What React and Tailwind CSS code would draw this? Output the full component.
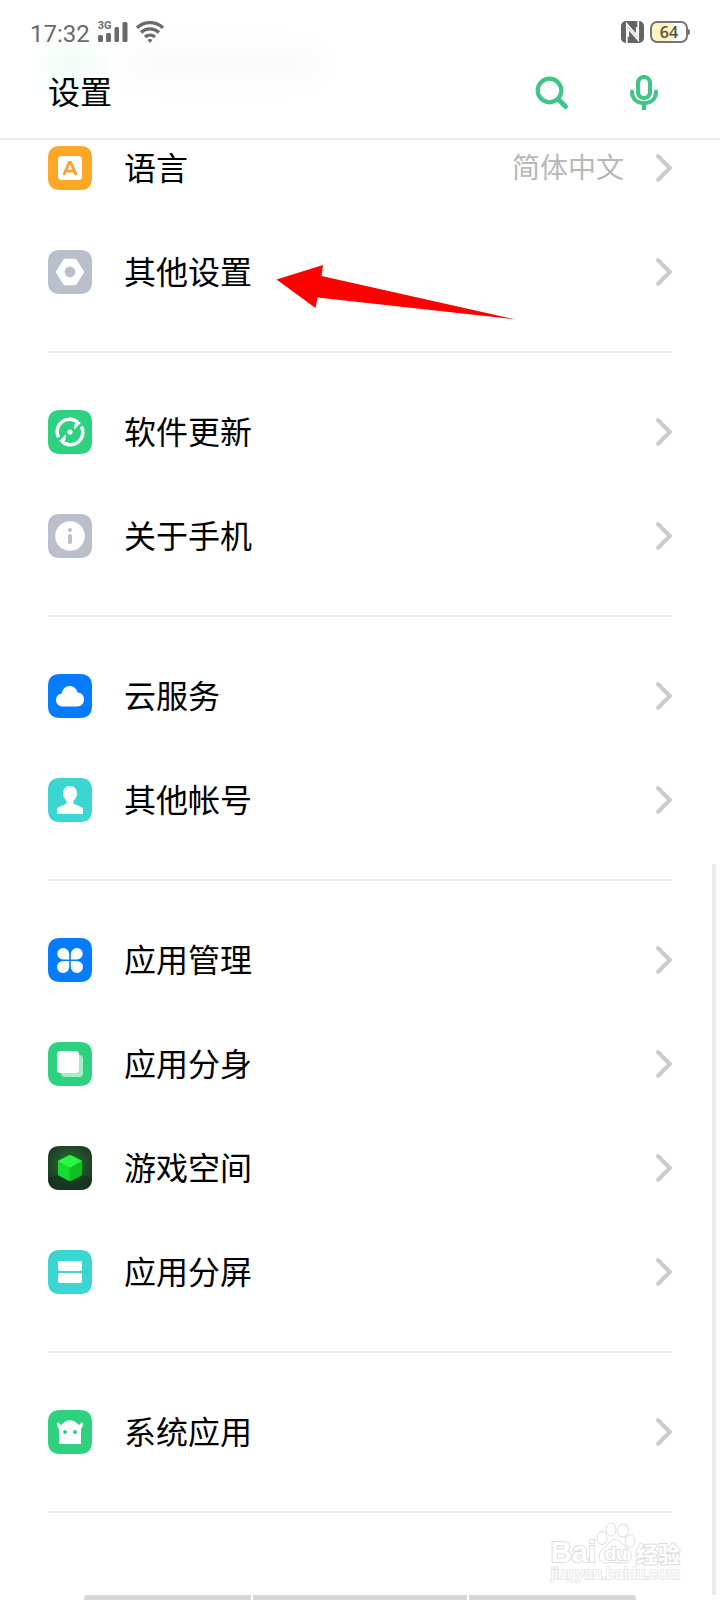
import React from "react";

const groups = [
  [
    { name: "语言", icon: "language", value: "简体中文" },
    { name: "其他设置", icon: "other" },
  ],
  [
    { name: "软件更新", icon: "update" },
    { name: "关于手机", icon: "about" },
  ],
  [
    { name: "云服务", icon: "cloud" },
    { name: "其他帐号", icon: "account" },
  ],
  [
    { name: "应用管理", icon: "apps" },
    { name: "应用分身", icon: "clone" },
    { name: "游戏空间", icon: "game" },
    { name: "应用分屏", icon: "split" },
  ],
  [{ name: "系统应用", icon: "system" }],
];

const tileColors = {
  language: "#fda727",
  other: "#b9bfcb",
  update: "#2ed180",
  about: "#b9bfcb",
  cloud: "#047cff",
  account: "#3bd6d2",
  apps: "#047cff",
  clone: "#2ed180",
  game: "url(#gameTile)",
  split: "#3bd6d2",
  system: "#2ed180",
};

const glyphs = {
  language: (
    <>
      <rect x="10" y="10" width="24" height="24" rx="3.5" fill="#fff" />
      <path d="M16.3 27.8 L21.2 16.500 H22.800 L27.700 27.800 M17.8 25 H26.200" fill="none" stroke="#f3a53a" strokeWidth="3" strokeLinecap="round" strokeLinejoin="round" />
    </>
  ),
  other: (
    <>
      <path d="M17 10.800 H27 L34 22 L27 33.200 H17 L10 22 Z" fill="#fff" stroke="#fff" strokeWidth="4" strokeLinejoin="round" />
      <circle cx="22" cy="22" r="5.400" fill="#b9bfcb" />
    </>
  ),
  update: (
    <>
      <g fill="none" stroke="#fff" strokeWidth="3.400">
        <path d="M10.600 27.500 A12.400 12.400 0 0 1 30 12.600" />
        <path d="M33.400 16.500 A12.400 12.400 0 0 1 14 31.400" />
      </g>
      <path d="M28.500 11 L33 12.800 L26 19.800 L26.600 14.500 Z" fill="#fff" />
      <path d="M15.500 33 L11 31.200 L18 24.200 L17.400 29.500 Z" fill="#fff" />
      <circle cx="22" cy="22" r="2.600" fill="#fff" />
    </>
  ),
  about: (
    <>
      <circle cx="22" cy="22" r="14.800" fill="#fff" />
      <circle cx="22" cy="16" r="2" fill="#b9bfcb" />
      <rect x="20" y="20" width="4" height="10" rx="2" fill="#b9bfcb" />
    </>
  ),
  cloud: (
    <path d="M15 32.500 C11 32.500 8 29.800 8 26.200 C8 22.400 10.600 19.900 13.700 19.500 C14.500 15 17.600 12 21.500 12 C25.400 12 28.600 14.500 29.600 18.500 C33.400 18.600 36 21.400 36 25.500 C36 29.700 32.900 32.500 29 32.500 Z" fill="#fff" />
  ),
  account: (
    <path d="M22 8 C26.200 8 29 11 29 15.200 C29 18.600 27.300 20.900 25.700 22.800 C25.100 23.600 25.200 25.300 26.200 25.900 L33 29 C34.500 29.800 35 30.600 35 32 V36 H9 V32 C9 30.600 9.500 29.800 11 29 L17.800 25.900 C18.800 25.300 18.900 23.600 18.300 22.800 C16.700 20.900 15 18.600 15 15.200 C15 11 17.800 8 22 8 Z" fill="#fff" />
  ),
  apps: (
    <g fill="#fff">
      <path d="M15 10 A6 6 0 0 1 21.200 16 V21.400 H15 A5.700 5.700 0 0 1 15 10 Z" />
      <path d="M29 10 A6 6 0 0 0 22.800 16 V21.400 H29 A5.700 5.700 0 0 0 29 10 Z" />
      <path d="M15 35 A6 6 0 0 0 21.200 29 V23 H15 A6 6 0 0 0 15 35 Z" />
      <path d="M29 35 A6 6 0 0 1 22.800 29 V23 H29 A6 6 0 0 1 29 35 Z" />
    </g>
  ),
  clone: (
    <>
      <rect x="13" y="13" width="22" height="22" rx="4" fill="#a5ecc9" />
      <rect x="9" y="9" width="22" height="22" rx="3.500" fill="#fff" />
    </>
  ),
  game: (
    <>
      <path d="M0 32 L12 28 H32 L44 32 C44 40 40 44 32 44 H12 C4 44 0 40 0 32 Z" fill="#12301c" opacity="0.6" />
      <g strokeWidth="2" strokeLinejoin="round">
        <path d="M22 10 L33 15.500 L22 21.500 L11 15.500 Z" fill="#2bf545" stroke="#2bf545" />
        <path d="M11 16.500 L21.500 22.500 V34 L11 28.500 Z" fill="#16dc30" stroke="#16dc30" />
        <path d="M33 16.500 L22.500 22.500 V34 L33 28.500 Z" fill="#0cc026" stroke="#0cc026" />
      </g>
    </>
  ),
  split: (
    <g fill="#fff">
      <rect x="10" y="11" width="24" height="10" rx="2" />
      <rect x="10" y="23" width="24" height="10" rx="2" />
    </g>
  ),
  system: (
    <>
      <path d="M11 34 V19 C9.800 17.800 9 15.600 8.800 13.800 C8.800 12.300 11 12 11.500 13.200 C11.800 14.200 12.600 14.900 13.500 14.800 C15.600 11.900 18.500 10.200 22 10.200 C25.500 10.200 28.400 11.900 30.500 14.800 C31.400 14.900 32.200 14.200 32.500 13.200 C33 12 35.200 12.300 35.200 13.800 C35 15.600 34.200 17.800 33 19 V34 Z" fill="#fff" />
      <circle cx="17" cy="22" r="2" fill="#2ed180" />
      <circle cx="27" cy="22" r="2" fill="#2ed180" />
    </>
  ),
};

function TileIcon({ kind }) {
  return (
    <svg className="size-11 shrink-0" viewBox="0 0 44 44" aria-hidden="true">
      {kind === "game" && (
        <defs>
          <radialGradient id="gameTile" cx="0.5" cy="0.45" r="0.65">
            <stop offset="0" stopColor="#1f8a30" />
            <stop offset="0.55" stopColor="#21502a" />
            <stop offset="1" stopColor="#1c3323" />
          </radialGradient>
        </defs>
      )}
      <path
        d="M12 0 H32 C40 0 44 4 44 12 V32 C44 40 40 44 32 44 H12 C4 44 0 40 0 32 V12 C0 4 4 0 12 0 Z"
        fill={tileColors[kind]}
      />
      {glyphs[kind]}
    </svg>
  );
}

function Chevron() {
  return (
    <svg className="h-7 w-4 shrink-0" viewBox="0 0 16 28" aria-hidden="true">
      <path d="M2.200 2.200 L13.800 14 L2.200 25.800" fill="none" stroke="#cbcbcb" strokeWidth="4.200" strokeLinecap="round" strokeLinejoin="round" />
    </svg>
  );
}

function Pointer() {
  return (
    <svg className="absolute top-10 left-[228px] h-16 w-60" viewBox="0 0 240 64" aria-hidden="true">
      <path d="M0.500 19.500 L47 5 L45.500 16 L240 59.500 L41.500 37.500 L39.500 48 Z" fill="#fd0000" />
    </svg>
  );
}

function Row({ item }) {
  return (
    <li className="relative">
      <a href="#" className="flex h-26 items-center gap-8">
        <TileIcon kind={item.icon} />
        <span className="flex-1 pb-1 text-[32px] leading-10 text-black">{item.name}</span>
        {item.value && <span className="pb-1 text-[28px] leading-10 text-[#b8b8b8]">{item.value}</span>}
        <Chevron />
      </a>
      {item.icon === "other" && <Pointer />}
    </li>
  );
}

function StatusBar() {
  return (
    <div className="flex h-16 items-center pr-[30px] pl-[30px] text-[#6b6b6b]">
      <time className="pt-1 font-[Roboto,sans-serif] text-[24px] leading-8">17:32</time>
      <div className="relative ml-2 h-[22px] w-[30px]">
        <span className="absolute top-0 left-0 font-[Roboto,sans-serif] text-[11px] leading-[10px] font-bold">3G</span>
        <svg className="h-[22px] w-[30px]" viewBox="0 0 30 22" fill="currentColor" aria-hidden="true">
          <rect x="0" y="14" width="5" height="7" rx="1.500" />
          <rect x="8" y="12" width="5" height="9" rx="1.500" />
          <rect x="16.500" y="6" width="4.500" height="15" rx="1.500" />
          <rect x="24.500" y="1" width="5" height="20" rx="1.500" />
        </svg>
      </div>
      <svg className="ml-2 h-[22px] w-7" viewBox="0 0 28 22" aria-hidden="true">
        <g fill="none" stroke="currentColor" strokeWidth="3.200">
          <path d="M1 6.800 C8.500 -0.200 19.500 -0.200 27 6.800" />
          <path d="M5 11.500 C10.300 6.700 17.700 6.700 23 11.500" />
          <path d="M9 16 C12 13.300 16 13.300 19 16" />
        </g>
        <path d="M11.500 18.900 C13 17.700 15 17.700 16.500 18.900 L14 22 Z" fill="currentColor" />
      </svg>
      <svg className="ml-auto h-[22px] w-[23px]" viewBox="0 0 23 22" aria-hidden="true">
        <rect width="23" height="22" rx="5" fill="#646464" />
        <path d="M5.800 22 V3 L15.800 14.500 V6" fill="none" stroke="#fff" strokeWidth="1.700" />
        <path d="M17.200 0 V19 L7.200 7.500 V16" fill="none" stroke="#fff" strokeWidth="1.700" />
      </svg>
      <div className="ml-1.5 flex items-center">
        <div className="flex h-[22px] w-[38px] items-center justify-center rounded-[7px] border-2 border-[#757575] bg-linear-to-r from-[#fcf3c0] from-50% to-white to-70% font-['Open_Sans',sans-serif] text-[16px] leading-4 font-semibold text-[#55513f]">
          64
        </div>
        <div className="h-1.5 w-0.5 rounded-r-sm bg-[#757575]" />
      </div>
    </div>
  );
}

function Header() {
  return (
    <header className="sticky top-0 z-10 overflow-hidden border-b-2 border-[#ebebeb] bg-white">
      <div className="absolute top-12 left-11 h-8 w-14 bg-[#f0fcf6] blur-md" />
      <div className="absolute top-12 left-32 h-8 w-48 bg-[#fafafa] blur-md" />
      <div className="relative">
        <StatusBar />
        <div className="flex h-[74px] items-start justify-between pr-[58px] pl-12">
          <h1 className="pt-1.5 text-[32px] leading-10 text-black">设置</h1>
          <div className="flex gap-14 pt-[11px]">
            <button type="button" aria-label="搜索" className="size-9">
              <svg className="size-9" viewBox="0 0 36 36" fill="none" stroke="#3fc586" aria-hidden="true">
                <circle cx="15.500" cy="15.500" r="11.800" strokeWidth="4.200" />
                <path d="M24.500 24.500 L31.500 31.500" strokeWidth="5" strokeLinecap="round" />
              </svg>
            </button>
            <button type="button" aria-label="语音" className="size-9">
              <svg className="size-9" viewBox="0 0 36 36" fill="none" stroke="#3fc586" aria-hidden="true">
                <rect x="12" y="2" width="12" height="21" rx="6" strokeWidth="4.200" />
                <path d="M6 16.500 C6 24 11 28.200 18 28.200 C25 28.200 30 24 30 16.500" strokeWidth="4" strokeLinecap="round" />
                <path d="M18 28 V35" strokeWidth="4.200" />
              </svg>
            </button>
          </div>
        </div>
      </div>
    </header>
  );
}

function Watermark() {
  const outline = "text-white [-webkit-text-stroke:2px_#dedede] [paint-order:stroke_fill]";
  return (
    <div className="absolute right-10 bottom-4 flex flex-col items-center">
      <div className="flex items-end">
        <span className={`font-['Liberation_Sans',sans-serif] text-[29px] leading-6 font-bold ${outline}`}>Bai</span>
        <div className="relative h-[42px] w-10">
          <svg className="h-[42px] w-10" viewBox="0 0 40 42" fill="#fff" stroke="#dedede" aria-hidden="true">
            <ellipse cx="6" cy="16" rx="5" ry="6.500" />
            <ellipse cx="15" cy="7.500" rx="5" ry="6.500" />
            <ellipse cx="27" cy="8.500" rx="5.300" ry="6.500" transform="rotate(12 27 8.500)" />
            <ellipse cx="34" cy="19" rx="5" ry="6.300" />
            <path d="M19 17.500 C24 17.500 27 23 31 26 C38 32 36 41 28 41 C23 41 17 40 12 41 C2 42 1 32 7 27 C12 23 14 17.500 19 17.500 Z" />
          </svg>
          <span className={`absolute inset-x-0 bottom-0 text-center font-['Liberation_Sans',sans-serif] text-[19px] leading-5 font-bold ${outline}`}>du</span>
        </div>
        <span className={`text-[22px] leading-6 font-bold ${outline}`}>经验</span>
      </div>
      <span className="font-['Liberation_Sans',sans-serif] text-[16px] leading-5 text-white [-webkit-text-stroke:2px_#e8e8e8] [paint-order:stroke_fill]">
        jingyan.baidu.com
      </span>
    </div>
  );
}

export default function App() {
  return (
    <div className="relative flex min-h-screen flex-col bg-white font-['Noto_Sans_CJK_SC',sans-serif]">
      <Header />
      <main className="-mt-6 px-12 pb-[87px]">
        {groups.map((items) => (
          <ul key={items[0].name} className="border-b-2 border-[#ebebeb] pt-[27px] pb-[27px] first:pt-0">
            {items.map((item) => (
              <Row key={item.name} item={item} />
            ))}
          </ul>
        ))}
      </main>
      <Watermark />
      <div className="fixed right-1 bottom-[5px] h-[731px] w-1 bg-[#ececec]" />
      <div className="fixed inset-x-[84px] bottom-0 flex h-[5px] gap-0.5 overflow-hidden rounded-t-sm">
        <div className="w-[167px] bg-[#d6d6d6]" />
        <div className="flex-1 bg-[#d6d6d6]" />
        <div className="w-[167px] bg-[#d6d6d6]" />
      </div>
    </div>
  );
}
